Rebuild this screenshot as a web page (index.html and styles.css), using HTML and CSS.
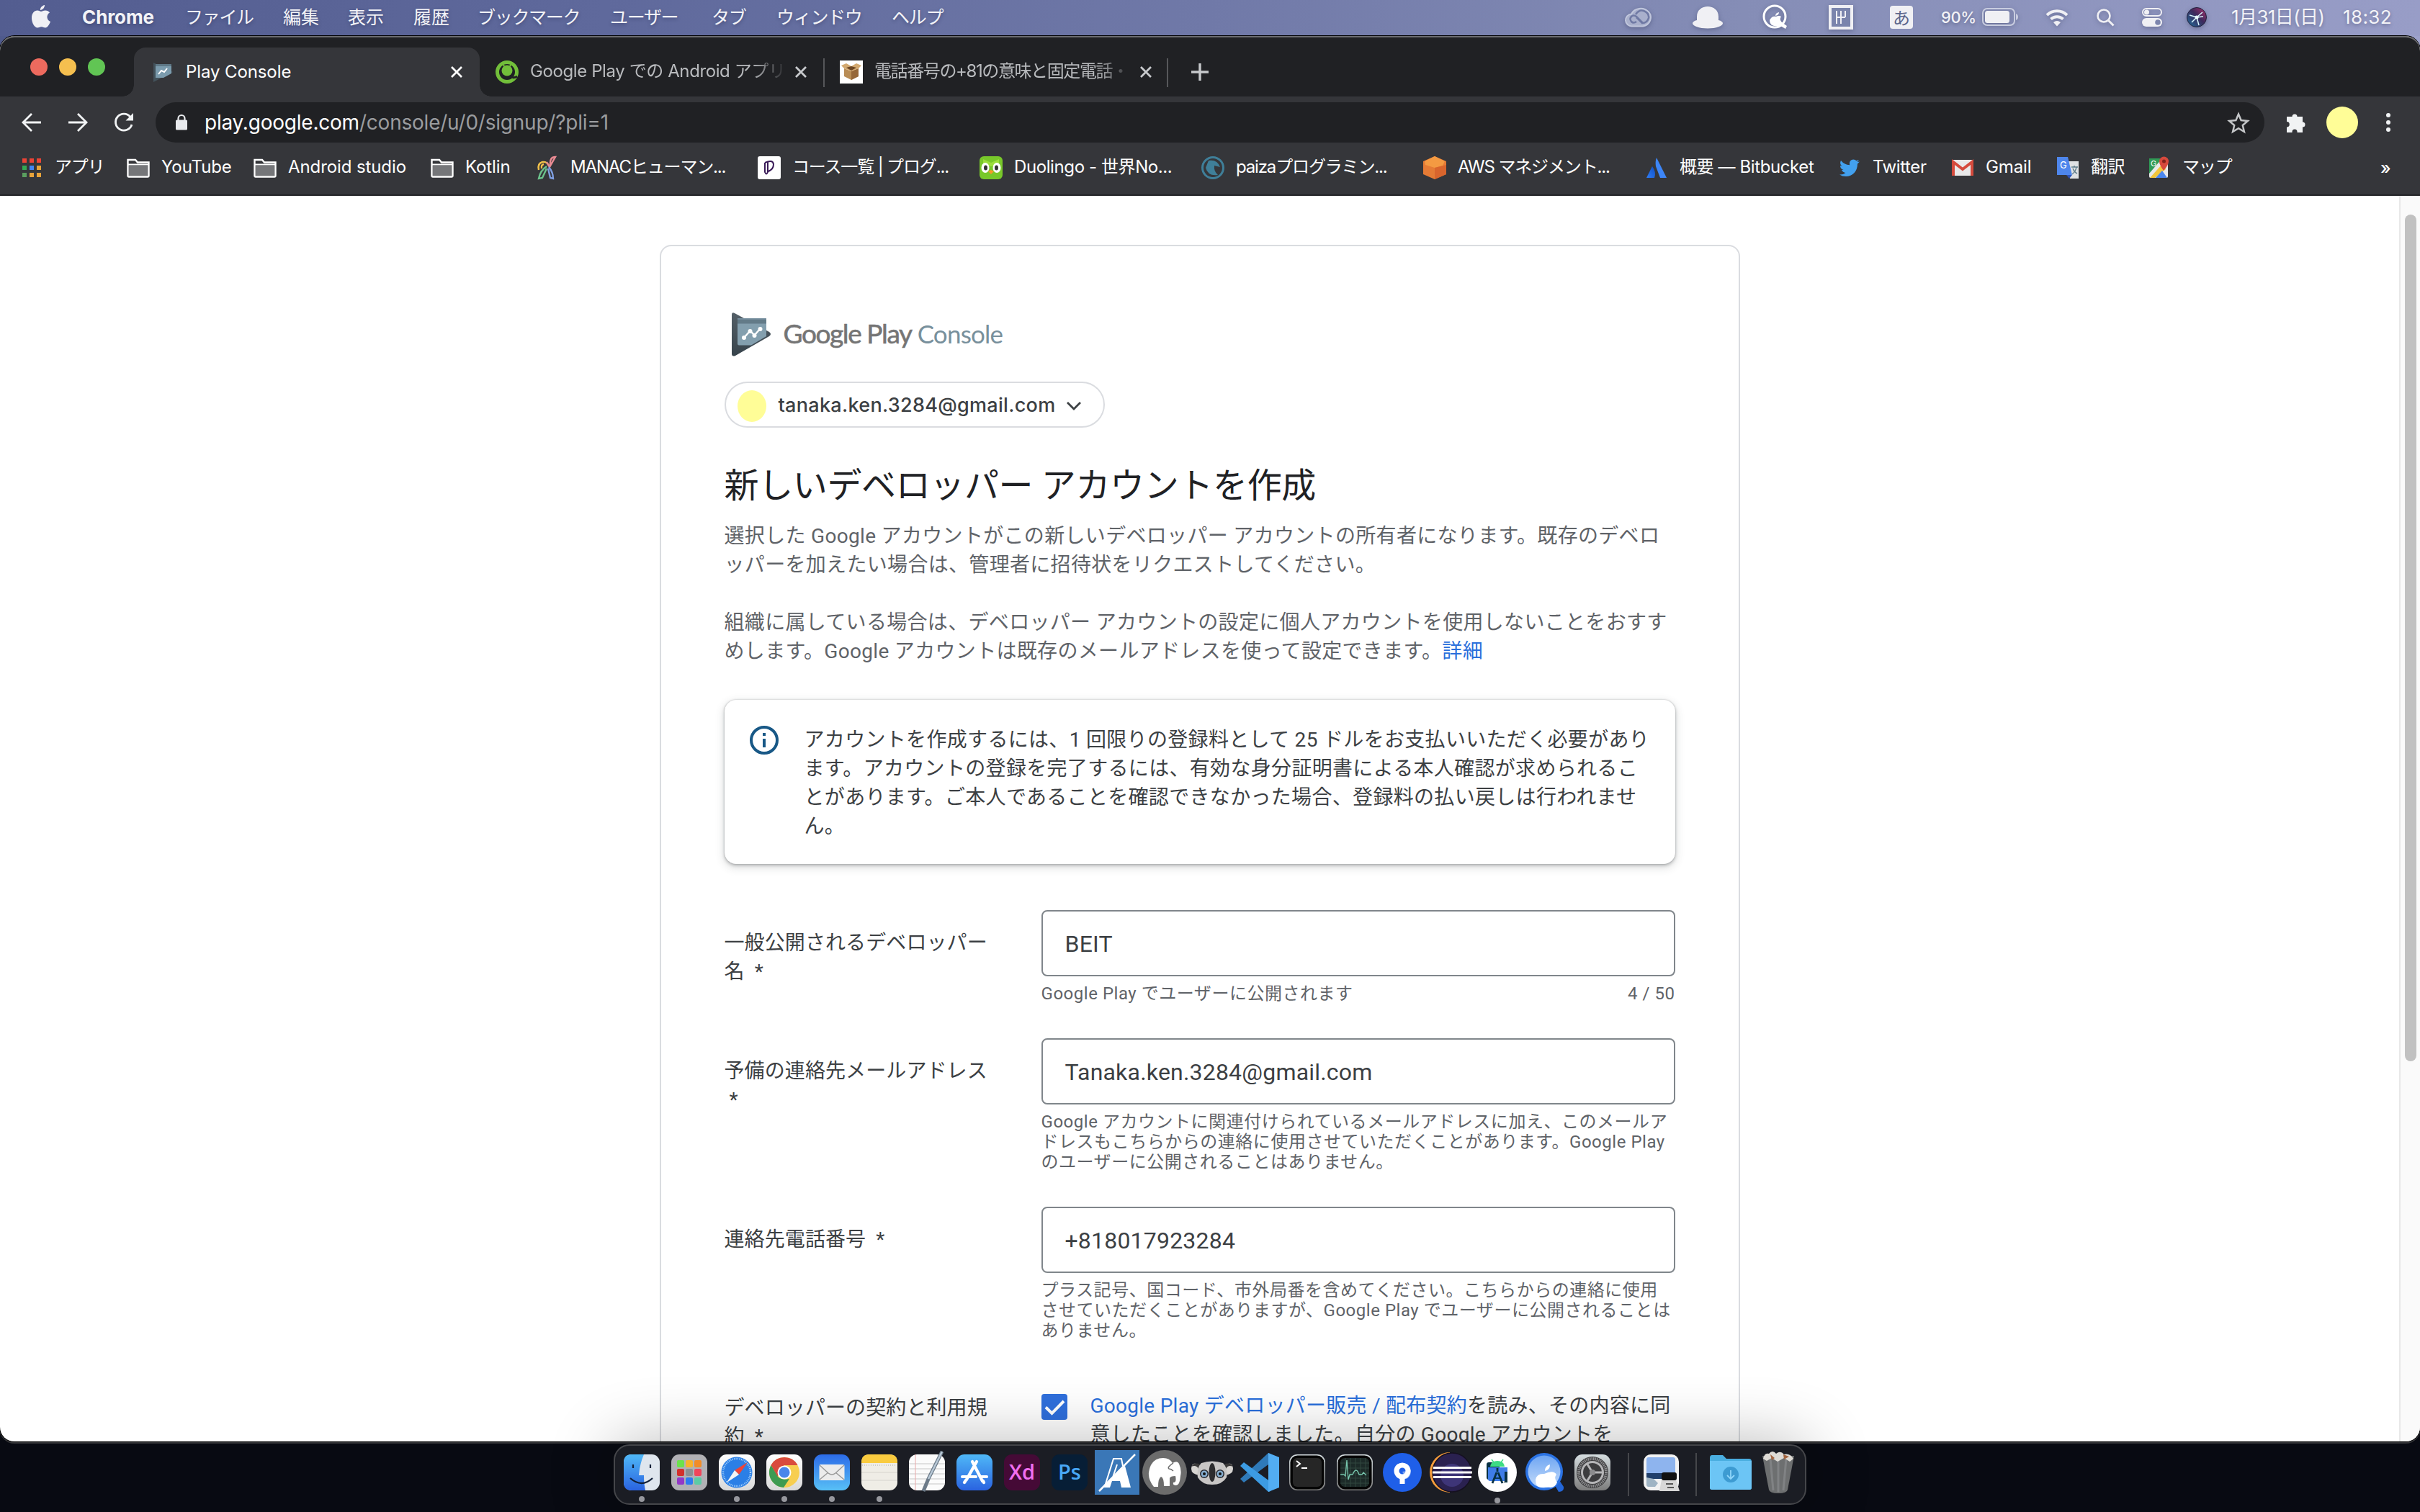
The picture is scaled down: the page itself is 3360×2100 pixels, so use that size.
FILE: index.html
```html
<!DOCTYPE html>
<html lang="ja">
<head>
<meta charset="utf-8">
<title>Play Console</title>
<link rel="stylesheet" href="styles.css">
</head>
<body>
<svg class="defs" width="0" height="0" aria-hidden="true">
  <defs>
    <linearGradient id="blueV" x1="0" y1="0" x2="0" y2="1"><stop offset="0" stop-color="#4fb8f7"/><stop offset="1" stop-color="#2a63e0"/></linearGradient>
    <linearGradient id="mailV" x1="0" y1="0" x2="0" y2="1"><stop offset="0" stop-color="#2c6be8"/><stop offset="1" stop-color="#58c0f6"/></linearGradient>
    <linearGradient id="greyV" x1="0" y1="0" x2="0" y2="1"><stop offset="0" stop-color="#ffffff"/><stop offset="1" stop-color="#d9d9d9"/></linearGradient>
    <linearGradient id="steelV" x1="0" y1="0" x2="0" y2="1"><stop offset="0" stop-color="#d5dde0"/><stop offset="1" stop-color="#7c7c7c"/></linearGradient>
    <linearGradient id="slateV" x1="0" y1="0" x2="0" y2="1"><stop offset="0" stop-color="#546068"/><stop offset="1" stop-color="#37434b"/></linearGradient>
    <linearGradient id="lensV" x1="0" y1="0" x2="0" y2="1"><stop offset="0" stop-color="#6ea5f2"/><stop offset="1" stop-color="#c4dcfb"/></linearGradient>
    <linearGradient id="atl" x1="1" y1="0" x2="0" y2="1"><stop offset="0" stop-color="#0f4fc4"/><stop offset="1" stop-color="#2f7df6"/></linearGradient>
    <linearGradient id="siri" x1="1" y1="0" x2="0" y2="1"><stop offset="0" stop-color="#b0306c"/><stop offset=".45" stop-color="#3c2a5c"/><stop offset="1" stop-color="#1f6f9c"/></linearGradient>
    <symbol id="folder" viewBox="0 0 32 32"><path d="M1.500 27V5h10.500l3 3.500h15.500V27q0 1.500-1.500 1.500H3q-1.500 0-1.500-1.500z" fill="none" stroke="#fff" stroke-width="2.400"/><path d="M3 13h26v14H3z" fill="#757679"/><path d="M2 11.500h28" stroke="#fff" stroke-width="2"/></symbol>
    <symbol id="close" viewBox="0 0 18 18"><path d="M2 2l14 14M16 2L2 16" stroke="currentColor" stroke-width="2.800"/></symbol>
  </defs>
</svg>
<div class="desktop">
  <header class="menubar">
    <nav class="menus">
      <svg class="apple" viewBox="0 0 26 32"><path d="M18 0c.3 3-2.600 7-6 7C11.500 4 14.500.5 18 0zM13 9c1.500 0 3-1.600 6-1.600 2.500 0 4.600 1.200 6 3.100-5.300 3-4.300 10.500 1 12.500-1.200 3.600-4 8.500-7 8.500-2 0-3-1.300-5.500-1.300S10 31.500 8 31.500C4 31.500 0 24.500 0 18 0 11.500 3.800 7.600 7.800 7.600 10.200 7.600 12 9 13 9z" fill="#f0f0f4"/></svg>
      <b>Chrome</b><span class="kana">ファイル</span><span>編集</span><span>表示</span><span>履歴</span><span class="kana">ブックマーク</span><span class="kana">ユーザー</span><span class="kana">タブ</span><span class="kana">ウィンドウ</span><span class="kana">ヘルプ</span>
    </nav>
    <div class="status">
      <svg width="38" height="28" viewBox="0 0 38 28"><path d="M9 26.500a8.500 8.500 0 0 1-1-17A14 12.500 0 1 1 24 26.500z" fill="#a9b0cc" stroke="#c0c6dc" stroke-width="2"/><path d="M24 22l-9-9q-4-3-7 0t0 7q3 3 7 0M14 10q5-7 11-5 8 3 7 10-2 7-9 7l-8-8" fill="none" stroke="#6f79a4" stroke-width="2.500"/></svg>
      <svg width="42" height="31" viewBox="0 0 42 31"><path d="M6 19V14C6 5 13 0 21 0s15 5 15 14v5c4 1 6 2.500 6 4.500C42 27 33 30.500 21 30.500S0 27 0 23.500C0 21.500 2 20 6 19z" fill="#f0f0f4"/></svg>
      <svg width="36" height="36" viewBox="0 0 36 36"><circle cx="17" cy="17" r="15" fill="none" stroke="#fff" stroke-width="3"/><path d="M23 11q0 4-5 5 0-4 5-5zM13 18q3-2 6-1 4-2 7 0-3 4 1 8l7 5-2 4-7-4q-8 1-12-1-6-6 0-11z" fill="#fff"/></svg>
      <svg width="34" height="34" viewBox="0 0 34 34"><path d="M2 2h30v30H2z" fill="#7a84ac" stroke="#f0f0f4" stroke-width="4"/><path d="M11 8v18M17 8v18M11 17h12M23 8v9M17 8v9" fill="none" stroke="#f0f0f4" stroke-width="2"/></svg>
      <span class="ime">あ</span>
      <span class="pct">90%</span>
      <svg width="51" height="26" viewBox="0 0 51 26"><rect x="1" y="1" width="44" height="23" rx="6" fill="none" stroke="#c9cde0" stroke-width="2"/><rect x="4" y="4" width="34" height="17" rx="3.500" fill="#f0f0f4"/><path d="M47 8q3 1 3 4.500T47 17z" fill="#c9cde0"/></svg>
      <svg width="32" height="25" viewBox="0 0 32 25"><path d="M2 9a20 20 0 0 1 28 0M7.500 14.500a12.500 12.500 0 0 1 17 0" fill="none" stroke="#f0f0f4" stroke-width="4"/><path d="M11 19q5-4 10 0l-5 5.500z" fill="#f0f0f4"/></svg>
      <svg width="26" height="25" viewBox="0 0 26 25"><circle cx="10" cy="10" r="8.500" fill="none" stroke="#f0f0f4" stroke-width="2.600"/><path d="M16 16l7.500 7.500" stroke="#f0f0f4" stroke-width="3"/></svg>
      <svg width="28" height="26" viewBox="0 0 28 26"><rect x="1" y="1" width="26" height="10" rx="5" fill="none" stroke="#f0f0f4" stroke-width="2"/><circle cx="6.500" cy="6" r="3.500" fill="#f0f0f4"/><rect y="14" width="28" height="12" rx="6" fill="#f0f0f4"/><circle cx="22" cy="20" r="3.800" fill="#7c85ad"/></svg>
      <svg width="28" height="28" viewBox="0 0 28 28"><circle cx="14" cy="14" r="13.500" fill="url(#siri)" stroke="#20223c"/><path d="M14 14L4 11M14 14l8-7M14 14l3 11M14 14l-7 7M14 14l9-1" stroke="#d8f8ff" stroke-width="1.500"/><circle cx="14" cy="14" r="2.500" fill="#eaffff"/></svg>
      <span class="date">1月31日(日)</span><span class="clock">18:32</span>
    </div>
  </header>

  <main class="window">
    <div class="tabstrip">
      <div class="lights"><i class="red"></i><i class="amber"></i><i class="green"></i></div>
      <div class="tab active">
        <svg class="fav" viewBox="0 0 32 32"><path d="M3 3v27L30 16z" fill="#43525b"/><path d="M6 5h22v13L17 24H6z" fill="#7b9bad"/><path d="M6 5h22v3H6z" fill="#5f7886"/><path d="M10 19l4-5 4 2 4-5" fill="none" stroke="#fff" stroke-width="2"/></svg>
        <span class="title">Play Console</span>
        <svg class="x"><use href="#close"/></svg>
      </div>
      <div class="tab second">
        <svg class="fav" viewBox="0 0 32 32"><circle cx="16" cy="16" r="13.500" fill="#202124" stroke="#72bf3a" stroke-width="5"/><circle cx="16" cy="14" r="7.500" fill="#72bf3a"/><path d="M10 5l3 4M22 5l-3 4" stroke="#72bf3a" stroke-width="2"/><path d="M21 21q3 5 9 1" fill="none" stroke="#202124" stroke-width="3"/></svg>
        <span class="title">Google Play での Android アプリ</span>
        <svg class="x"><use href="#close"/></svg>
      </div>
      <div class="tab third">
        <svg class="fav" viewBox="0 0 32 32"><path d="M0 0h32v32H0z" fill="#fff"/><path d="M6 11l10 4 10-4v11l-10 5-10-5z" fill="#b98d56"/><path d="M16 15l10-4v11l-10 5z" fill="#96683a"/><path d="M6 11l-4-4 7-3 7 4 7-4 7 3-4 4-10 4z" fill="#d3a970"/><path d="M9 10l7-2 7 2-7 4z" fill="#6c4623"/></svg>
        <span class="title">電話番号の+81の意味と固定電話・</span>
        <svg class="x"><use href="#close"/></svg>
      </div>
      <svg class="plus" viewBox="0 0 24 24"><path d="M12 0v24M0 12h24" stroke="#c7c9cc" stroke-width="3.400"/></svg>
    </div>

    <div class="toolbar">
      <svg width="28" height="28" viewBox="0 0 28 28"><path d="M27 14H3M14 2L2 14l12 12" fill="none" stroke="#f1f3f4" stroke-width="2.800"/></svg>
      <svg width="28" height="28" viewBox="0 0 28 28"><path d="M1 14h24M14 2l12 12-12 12" fill="none" stroke="#f1f3f4" stroke-width="2.800"/></svg>
      <svg width="28" height="28" viewBox="0 0 28 28"><path d="M23 6.500A11.500 11.500 0 1 0 25 17" fill="none" stroke="#f1f3f4" stroke-width="2.800"/><path d="M27 1v10.500H16.500z" fill="#f1f3f4"/></svg>
      <div class="omnibox">
        <svg width="16" height="22" viewBox="0 0 16 22"><rect y="7.500" width="16" height="14" rx="1.500" fill="#e8eaed"/><path d="M3.500 9V5.500a4.500 4.500 0 0 1 9 0V9" fill="none" stroke="#e8eaed" stroke-width="2.200"/></svg>
        <span class="url">play.google.com<em>/console/u/0/signup/?pli=1</em></span>
        <svg class="star" width="30" height="29" viewBox="0 0 30 29"><path d="M15 2.500l3.600 8.600 9.200.8-7 6.100 2.100 9-7.900-4.800L7.100 27l2.100-9-7-6.100 9.200-.8z" fill="none" stroke="#c4c6c8" stroke-width="2.500"/></svg>
      </div>
      <svg width="28" height="28" viewBox="0 0 28 28"><path d="M1 6h7.500a3.500 3.500 0 1 1 7 0H23v7.500a3.500 3.500 0 1 1 0 7V28h-7.500v-1a3.500 3.500 0 0 0-7 0v1H1v-7.500a3.700 3.700 0 0 0 0-7.500z" fill="#f1f3f4"/></svg>
      <span class="avatar"></span>
      <svg width="8" height="28" viewBox="0 0 8 28"><circle cx="4" cy="4" r="3" fill="#f1f3f4"/><circle cx="4" cy="14" r="3" fill="#f1f3f4"/><circle cx="4" cy="24" r="3" fill="#f1f3f4"/></svg>
    </div>

    <div class="bookmarks">
      <a><svg viewBox="0 0 32 32"><path d="M3 3h6v6H3zM13 3h6v6h-6zM23 3h6v6h-6z" fill="#ea4335"/><path d="M3 13h6v6H3z" fill="#34a853"/><path d="M13 13h6v6h-6z" fill="#4285f4"/><path d="M23 13h6v6h-6zM13 23h6v6h-6zM23 23h6v6h-6z" fill="#e8a33a"/><path d="M3 23h6v6H3z" fill="#5a9e5f"/></svg><span class="k">アプリ</span></a>
      <a><svg><use href="#folder"/></svg><span class="latin">YouTube</span></a>
      <a><svg><use href="#folder"/></svg><span class="latin">Android studio</span></a>
      <a><svg><use href="#folder"/></svg><span class="latin">Kotlin</span></a>
      <a><svg viewBox="0 0 32 32" fill="none" stroke-width="2.400"><path d="M4 19q-2-9 5-11 6-1 9 5M8 17q-1-5 3-6" stroke="#f0c04a"/><path d="M15 8l4 7 8-14q-8 0-7 11" stroke="#e98b93"/><path d="M15 14q-9 6-11 17l5-1 6-13" stroke="#6cc38c"/><path d="M18 15q6 7 6 16l-4-1-3-13" stroke="#7f9fe0"/></svg><span class="k">MANACヒューマン...</span></a>
      <a><svg viewBox="0 0 32 32"><rect width="32" height="32" rx="3" fill="#fff"/><path d="M10 9q11-5 12 2 0 7-7 10M10 9v13q2 5 4 0V7" fill="none" stroke="#3a1b58" stroke-width="2"/></svg><span class="k">コース一覧 | プログ...</span></a>
      <a><svg viewBox="0 0 32 32"><rect width="32" height="32" rx="6" fill="#78c82a"/><path d="M5 4l11 5 11-5v10H5z" fill="#9bdd3c"/><ellipse cx="8" cy="16" rx="5.500" ry="7" fill="#fff"/><ellipse cx="24" cy="16" rx="5.500" ry="7" fill="#fff"/><ellipse cx="8.500" cy="16" rx="2.500" ry="3.500" fill="#333"/><ellipse cx="23.500" cy="16" rx="2.500" ry="3.500" fill="#333"/><path d="M12 21l4-2 4 2-4 4z" fill="#f49a28"/></svg><span>Duolingo - 世界No...</span></a>
      <a><svg viewBox="0 0 32 32"><circle cx="16" cy="16" r="14.500" fill="none" stroke="#3f7f99" stroke-width="3"/><path d="M10 6q12-2 16 9l-8-2q-1 8 5 13-14 2-17-10z" fill="#3f7f99"/></svg><span class="k">paizaプログラミン...</span></a>
      <a><svg viewBox="0 0 32 32"><path d="M16 0l16 7v18l-16 7-16-7V7z" fill="#e57b35"/><path d="M16 0l14 7-3 6-11 3L3 12 2 7z" fill="#f49a42"/><path d="M16 16l16-4v13l-16 7z" fill="#d9652d"/></svg><span class="k">AWS マネジメント...</span></a>
      <a><svg viewBox="0 0 32 32"><path d="M16 2q-2 5-1 12l6 16h9z" fill="#3d86f8"/><path d="M10 14q6 8 3 16H2z" fill="url(#atl)"/></svg><span>概要 — Bitbucket</span></a>
      <a><svg viewBox="0 0 32 32"><path d="M30 7.500l-3 3C27 21 20 28 11 28q-5 0-9-2.500 5 .3 8.500-2.500-4-.5-5.500-4h2.500Q3 17.500 3 13l2.500.7Q1.500 10.500 4 6q5 6 12 6.200Q15 5 21 4.500q3 0 4.500 1.800L29 5l-2.300 3z" fill="#42a0ee"/></svg><span>Twitter</span></a>
      <a><svg viewBox="0 0 32 32"><rect x="1" y="5" width="30" height="22" rx="2" fill="#e9e9e9"/><path d="M3 27V8l13 10L29 8v19" fill="none" stroke="#d54b3d" stroke-width="4"/></svg><span class="latin">Gmail</span></a>
      <a><svg viewBox="0 0 32 32"><path d="M14 7h17v24H19z" fill="#dfe1e3"/><path d="M1 1h15l6 25H1z" fill="#4e86ec"/><path d="M14 26h8l-4 5z" fill="#2c52b8"/><path d="M21 15h9M25 13v2M22 25q5-4 6-10M23 17q2 5 6 7" stroke="#607d8b" stroke-width="1.500" fill="none"/><text x="5" y="17" font-size="13" fill="#fff">G</text></svg><span>翻訳</span></a>
      <a><svg viewBox="0 0 32 32"><rect x="2" y="3" width="26" height="27" rx="2" fill="#e8e8e8"/><path d="M2 3h18L2 24z" fill="#2f9a55"/><path d="M3 30L20 11l5 7L10 30z" fill="#f3c63b"/><path d="M11 30l9-10 7 10z" fill="#4a86ee"/><path d="M22 20q-6-8-6-13a6.500 6.500 0 0 1 13 0q0 5-7 13z" fill="#d6493c"/><circle cx="22.500" cy="7" r="2.500" fill="#84241c"/><text x="4" y="14" font-size="11" fill="#fff">G</text></svg><span class="k">マップ</span></a>
      <b>»</b>
    </div>

    <div class="viewport">
      <div class="page">
        <section class="card">
          <div class="logo">
            <svg width="54" height="60" viewBox="0 0 54 60"><path d="M0 3Q0-1 4 1l48 26q4 3 0 6L5 60Q0 62 0 57z" fill="url(#slateV)"/><path d="M8 8h40v25L27 45.500H10q-2 0-2-2z" fill="#839fae"/><path d="M8 8h40v7.500H8z" fill="#637b88"/><path d="M8 8h40v1.800H8z" fill="#7890a0"/><path d="M17 35l8.500-9.500 6 6 8-9" fill="none" stroke="#fff" stroke-width="2.400"/><g fill="#fff"><circle cx="17" cy="35" r="3"/><circle cx="25.500" cy="26" r="3"/><circle cx="31.500" cy="32" r="3"/><circle cx="39.500" cy="23" r="3"/></g></svg>
            <span class="wordmark">Google Play</span><span class="wordmark light">Console</span>
          </div>
          <button class="account"><i></i><span>tanaka.ken.3284@gmail.com</span><svg width="22" height="14" viewBox="0 0 22 14"><path d="M2 2l9 9 9-9" fill="none" stroke="#3c4043" stroke-width="2.800"/></svg></button>
          <h1>新しいデベロッパー アカウントを作成</h1>
          <p>選択した Google アカウントがこの新しいデベロッパー アカウントの所有者になります。既存のデベロ<br>ッパーを加えたい場合は、管理者に招待状をリクエストしてください。</p>
          <p>組織に属している場合は、デベロッパー アカウントの設定に個人アカウントを使用しないことをおすす<br>めします。Google アカウントは既存のメールアドレスを使って設定できます。<a>詳細</a></p>
          <div class="alert">
            <svg width="40" height="40" viewBox="0 0 40 40"><circle cx="20" cy="20" r="18" fill="none" stroke="#185886" stroke-width="4"/><path d="M18 18h4v12h-4zM18 10h4v4h-4z" fill="#185886"/></svg>
            <div>アカウントを作成するには、1 回限りの登録料として 25 ドルをお支払いいただく必要があり<br>ます。アカウントの登録を完了するには、有効な身分証明書による本人確認が求められるこ<br>とがあります。ご本人であることを確認できなかった場合、登録料の払い戻しは行われませ<br>ん。</div>
          </div>
          <form class="form">
            <label>一般公開されるデベロッパー<br>名 &nbsp;*</label>
            <div class="field"><div class="input">BEIT</div><div class="help"><span>Google Play でユーザーに公開されます</span><span>4 / 50</span></div></div>
            <label>予備の連絡先メールアドレス<br>&nbsp;*</label>
            <div class="field"><div class="input">Tanaka.ken.3284@gmail.com</div><div class="help">Google アカウントに関連付けられているメールアドレスに加え、このメールア<br>ドレスもこちらからの連絡に使用させていただくことがあります。Google Play<br>のユーザーに公開されることはありません。</div></div>
            <label>連絡先電話番号 &nbsp;*</label>
            <div class="field"><div class="input">+818017923284</div><div class="help">プラス記号、国コード、市外局番を含めてください。こちらからの連絡に使用<br>させていただくことがありますが、Google Play でユーザーに公開されることは<br>ありません。</div></div>
            <label>デベロッパーの契約と利用規<br>約 &nbsp;*</label>
            <div class="agree"><svg width="36" height="36" viewBox="0 0 36 36"><rect width="36" height="36" rx="4" fill="#2f6fdc"/><path d="M6 18.500l8.500 8.500L31 10" fill="none" stroke="#fff" stroke-width="4"/></svg><div><a>Google Play デベロッパー販売 / 配布契約</a>を読み、その内容に同<br>意したことを確認しました。自分の Google アカウントを</div></div>
          </form>
        </section>
      </div>
      <div class="scroll"><i></i></div>
    </div>
  </main>

  <footer class="dock">
    <div class="slot on"><svg viewBox="0 0 50 50"><rect width="50" height="50" rx="11" fill="#dfe6ee"/><path d="M11 0h17q-6 14-7 29h7q0 12 2 21H11Q0 50 0 39V11Q0 0 11 0z" fill="url(#blueV)"/><path d="M13 14v5M37 14v5" stroke="#12213a" stroke-width="2.200"/><path d="M9 33q16 14 31 0" fill="none" stroke="#12213a" stroke-width="2.200"/></svg></div>
    <div class="slot"><svg viewBox="0 0 50 50"><rect width="50" height="50" rx="11" fill="#b1b1b5"/><g><rect x="8" y="8" width="10" height="10" rx="2" fill="#6be24c"/><rect x="20" y="8" width="10" height="10" rx="2" fill="#f7b32c"/><rect x="32" y="8" width="10" height="10" rx="2" fill="#f28c28"/><rect x="8" y="20" width="10" height="10" rx="2" fill="#d3302c"/><rect x="20" y="20" width="10" height="10" rx="2" fill="#8b8f94"/><rect x="32" y="20" width="10" height="10" rx="2" fill="#f0455a"/><rect x="8" y="32" width="10" height="10" rx="2" fill="#9338c8"/><rect x="20" y="32" width="10" height="10" rx="2" fill="#2d7bf0"/><rect x="32" y="32" width="10" height="10" rx="2" fill="#5ccba5"/></g></svg></div>
    <div class="slot on"><svg viewBox="0 0 50 50"><rect width="50" height="50" rx="11" fill="url(#greyV)"/><circle cx="25" cy="25" r="21.500" fill="#2b7fe6"/><circle cx="25" cy="25" r="19" fill="none" stroke="#a9d4fb" stroke-width="2.500" stroke-dasharray="1 1.500"/><path d="M40 11L28 28l-6-6z" fill="#ee4438"/><path d="M11 39l11-17 6 6z" fill="#f4f4f4"/></svg></div>
    <div class="slot on"><svg viewBox="0 0 50 50"><rect width="50" height="50" rx="11" fill="url(#greyV)"/><circle cx="25" cy="25" r="21" fill="#f7ce50"/><path d="M25 4a21 21 0 0 1 18.500 11H25L15.500 31 6.500 15A21 21 0 0 1 25 4z" fill="#d94b3d"/><path d="M6.500 15L16 31q5 5 16 3L24 46A21 21 0 0 1 6.500 15z" fill="#3e9b52"/><circle cx="25" cy="25" r="9.500" fill="#fff"/><circle cx="25" cy="25" r="7.500" fill="#4a86ea"/></svg></div>
    <div class="slot on"><svg viewBox="0 0 50 50"><rect width="50" height="50" rx="11" fill="url(#mailV)"/><rect x="7.500" y="14" width="35" height="22" rx="2" fill="#ececec"/><path d="M8 15l12 11q5 4 10 0l12-11M8 35l12-10M42 35L30 25" fill="none" stroke="#9a9a9a" stroke-width="1.500"/></svg></div>
    <div class="slot on"><svg viewBox="0 0 50 50"><rect width="50" height="50" rx="11" fill="#efede6"/><path d="M0 12V11Q0 0 11 0h28q11 0 11 11v1z" fill="#f9cb3f"/><path d="M1 15h48" stroke="#aaa" stroke-dasharray="1 2"/><path d="M0 25h50M0 36h50" stroke="#d6d4cd"/></svg></div>
    <div class="slot"><svg viewBox="0 0 50 50"><rect width="50" height="50" rx="11" fill="#fbfbfb"/><path d="M0 13h50M0 20h50M0 27h50M0 34h50M0 41h50" stroke="#c7c7c7"/><path d="M9 0v50" stroke="#e9a7a7"/><path d="M46-4L27 34l-7 17" stroke="#6d7b89" stroke-width="5" fill="none"/><path d="M46-4L27 34" stroke="#b8c8d6" stroke-width="2.500"/></svg></div>
    <div class="slot"><svg viewBox="0 0 50 50"><rect width="50" height="50" rx="11" fill="url(#blueV)"/><path d="M22 10l14 27M28 10L14 35M8 31h19M34 31h8M11 39l2-3M38 39l-1-2" stroke="#fff" stroke-width="4.200" stroke-linecap="round"/></svg></div>
    <div class="slot"><span class="tile xd">Xd</span></div>
    <div class="slot"><span class="tile ps">Ps</span></div>
    <div class="slot"><svg class="big" viewBox="0 0 62 62"><path d="M0 0h62v62H0z" fill="#3a77b7"/><path d="M39 22l-2-10H26L14 50M31 20l-5 15h5" fill="none" stroke="#fff" stroke-width="2"/><path d="M42 22l8 30H37l-2-9H24l-3 9h-9l4-7z" fill="#fff"/><path d="M6 57L56 6" stroke="#fff" stroke-width="2.500"/></svg></div>
    <div class="slot"><svg class="big" viewBox="0 0 62 62"><circle cx="31" cy="31" r="31" fill="#6c6c6c"/><path d="M16 51q-8-10-7-20 3-20 20-20 9 0 13 7 7-4 9 1 4 9 2 17-1 13-6 13-5 0-4-4 5 0 3-9-7 0-8 3v11H30q0-12-4-13-4 2-4 14z" fill="#fff"/><path d="M43 18q-9 6-6 8 3 0 6 3" fill="none" stroke="#6c6c6c" stroke-width="1.500"/></svg></div>
    <div class="slot"><svg class="big" viewBox="0 0 62 62"><path d="M14 22Q3 14 2 26q0 8 12 9z" fill="#d7d4d1"/><path d="M48 22q11-8 12 4 0 8-12 9z" fill="#d7d4d1"/><path d="M14 20q-8-4-12 3 7-3 10 3zM48 20q8-4 12 3-7-3-10 3z" fill="#3b3a3a"/><path d="M16 18q15-5 30 0 7 7 5 20-6 10-20 10T11 38q-2-13 5-20z" fill="#c8c6c5"/><circle cx="20" cy="33" r="6" fill="#24262b"/><circle cx="42" cy="33" r="6" fill="#24262b"/><circle cx="20" cy="33" r="4.500" fill="#86aed0"/><circle cx="42" cy="33" r="4.500" fill="#86aed0"/><circle cx="20" cy="33" r="2" fill="#111"/><circle cx="42" cy="33" r="2" fill="#111"/><ellipse cx="31" cy="31" rx="4.500" ry="13" fill="#2c2c2e"/></svg></div>
    <div class="slot"><svg class="mid" viewBox="0 0 54 54"><path d="M0 36l5 5L43 13V2L39 0z" fill="#2f7ab9"/><path d="M0 18l5-5 37 27v13l-3 1z" fill="#3c9be3"/><path d="M39 0l15 6v42l-15 6z" fill="#52adf2"/></svg></div>
    <div class="slot"><svg viewBox="0 0 50 50"><rect width="50" height="50" rx="11" fill="url(#steelV)"/><rect x="1.500" y="1.500" width="47" height="47" rx="10" fill="#050505"/><rect x="5" y="5" width="40" height="40" rx="6" fill="#262626"/><path d="M10 9l5 4-5 4M17 19h8" fill="none" stroke="#fff" stroke-width="2"/></svg></div>
    <div class="slot"><svg viewBox="0 0 50 50"><rect width="50" height="50" rx="11" fill="url(#steelV)"/><rect x="1.500" y="1.500" width="47" height="47" rx="10" fill="#050505"/><rect x="5" y="5" width="40" height="40" rx="6" fill="#1c2a28"/><path d="M12 5v40M19 5v40M26 5v40M33 5v40M40 5v40M5 12h40M5 19h40M5 26h40M5 33h40M5 40h40" stroke="#30463f"/><path d="M5 28h5l2 2 2-22 2 27 2-7h4q5-12 9 0h4l2-3 4 4" fill="none" stroke="#77c7ae" stroke-width="1.300"/></svg></div>
    <div class="slot"><svg class="mid" viewBox="0 0 54 54"><circle cx="27" cy="27" r="27" fill="#1f5fe8"/><path d="M27 26l12-2q0 10-7 12z" fill="#7ca4f3"/><circle cx="27" cy="25" r="8" fill="none" stroke="#fff" stroke-width="7"/><path d="M23.500 31h7v12h-7z" fill="#fff"/></svg></div>
    <div class="slot"><svg class="big" viewBox="0 0 62 62"><path d="M31 3a28 28 0 0 0 0 56" fill="#f59c3c"/><circle cx="34" cy="31" r="27" fill="#2a2150" stroke="#151020" stroke-width="1.500"/><circle cx="34" cy="35" r="16" fill="#3e3578"/><path d="M8 24.500h53M7 31h55M8 37.500h53" stroke="#fff" stroke-width="3"/></svg></div>
    <div class="slot on"><svg class="mid" viewBox="0 0 54 54"><circle cx="27" cy="27" r="27" fill="#fff"/><rect x="12" y="13" width="18" height="24" rx="3" fill="#083042"/><path d="M14 20h27v19H17q-3 0-3-3z" fill="#3f7de8"/><path d="M17 19a10 8 0 0 1 20 0z" fill="#3ddc84"/><path d="M19 9l3 4M35 9l-3 4" stroke="#3ddc84" stroke-width="1.500"/><path d="M27 21v5M26 27l-6 15M28 27l6 15" stroke="#083042" stroke-width="2.800"/><path d="M22 35h10" stroke="#083042" stroke-width="1.800"/><path d="M37 26h4v15h-6q2 0 2-3z" fill="#083042"/></svg></div>
    <div class="slot"><svg class="mid" viewBox="0 0 54 54"><path d="M38 40l8 14q8 0 7-7l-8-12z" fill="#2467d9"/><circle cx="26" cy="26" r="26" fill="#2b73e4"/><circle cx="26" cy="26" r="22.500" fill="url(#lensV)"/><path d="M34 16q0 8-7 9 0-7 7-9zM26 29q13-6 17 1-4 5 1 11-3 7-9 7l-8-1Q14 51 14 37q2-9 12-8z" fill="#fff"/></svg></div>
    <div class="slot"><svg viewBox="0 0 50 50"><rect width="50" height="50" rx="11" fill="url(#steelV)"/><circle cx="25" cy="25" r="22" fill="#3c3c3e"/><circle cx="25" cy="25" r="19" fill="none" stroke="#8e8e90" stroke-width="4" stroke-dasharray="1.500 1"/><circle cx="25" cy="25" r="14.500" fill="none" stroke="#b5b5b7" stroke-width="3"/><path d="M25 25h15M25 25L17 12M25 25l-8 13" stroke="#b5b5b7" stroke-width="3"/><circle cx="25" cy="25" r="4" fill="#8b8b8d"/></svg></div>
    <hr>
    <div class="slot"><svg class="mid" viewBox="0 0 54 54"><rect x="2" y="2" width="49" height="50" rx="10" fill="#f2f2f2"/><path d="M6 9q0-3 3-3h34q3 0 3 3v19H6z" fill="#8eb4ee"/><path d="M6 28h40v8H6z" fill="#203f6b"/><path d="M6 34l10 2 6 6-4 5H9q-3 0-3-3z" fill="#9fb4c4"/><path d="M27 37h20l5 16H24z" fill="#d8d8d8"/><rect x="27" y="27" width="21" height="11" rx="3" fill="#111"/><path d="M33 43h10M35 48h9" stroke="#555" stroke-width="2"/></svg></div>
    <hr>
    <div class="slot"><svg class="mid" viewBox="0 0 54 50"><path d="M-2 5q0-4 3-4h15l5 5h31q4 0 4 4v36q0 3-3 3H1q-3 0-3-3z" fill="#4aaee0"/><path d="M-2 9h58v37q0 3-3 3H1q-3 0-3-3z" fill="#6cc5f5"/><circle cx="27" cy="28" r="11" fill="#3d9bd2"/><path d="M27 22v11M22 29l5 5 5-5" fill="none" stroke="#8fd5fa" stroke-width="1.800"/></svg></div>
    <div class="slot"><svg class="big" viewBox="0 0 62 62"><path d="M9 8l9 47q1 5 13 5t13-5l9-47z" fill="#6d6f70"/><path d="M20 12l4 44M31 12v46M42 12l-4 44" stroke="#808284" stroke-width="3"/><path d="M10 12q2-9 8-7 5-6 10 0 6-5 11 1 8-2 13 6l-5 4-8-5-9 5-8-5-7 4z" fill="#dedbd5"/><path d="M20 6l6 5-4 3zM38 6l8 3-7 4z" fill="#a4653f"/></svg></div>
  </footer>
</div>
</body>
</html>
```
FILE: styles.css
```css
* { box-sizing: border-box; }
body { margin: 0; background: #0b0d16; }
svg { display: block; overflow: visible; }
.defs { position: absolute; }
i, em { font-style: normal; }
hr { margin: 0; border: 0; }

.desktop {
  position: relative;
  width: 3360px;
  height: 2100px;
  overflow: hidden;
  display: flex;
  flex-direction: column;
  background: linear-gradient(90deg, #4f5a8c, #9da2cb) top / 100% 100px no-repeat, #080a12;
  font-family: Inter, "Noto Sans CJK JP", sans-serif;
  white-space: nowrap;
}

/* macOS menu bar */
.menubar {
  flex: none;
  height: 50px;
  padding: 0 0 2px 44px;
  display: flex;
  justify-content: space-between;
  background: linear-gradient(90deg, #535d90 0%, #5f699c 25%, #7079a8 50%, #858db6 72%, #989dc7 100%);
  color: #f3f3f7;
  font-size: 25px;
  line-height: 46px;
  text-shadow: 0 2px 5px rgba(20, 25, 60, .35);
}
.menus { display: grid; grid-template-columns: 70px 143px 136px 90px 91px 89px 184px 141px 90px 160px 100px; align-items: center; }
.menus span { margin-top: -1px; }
.menus .apple { width: 26px; height: 32px; margin-top: -3px; }
.menus b { font-size: 26px; letter-spacing: -.1px; }
.kana { letter-spacing: -1.300px; }
.status { display: grid; grid-template-columns: 93px 97px 92px 85px 71px 57px 88px 71px 63px 62px 62px 155px 107px; align-items: center; }
.status svg { filter: drop-shadow(0 2px 3px rgba(20, 25, 60, .3)); }
.ime { width: 32px; height: 32px; border-radius: 4px; background: #f0f0f4; color: #5c668c; font: 24px/31px "Noto Sans CJK JP", sans-serif; text-align: center; text-shadow: none; }
.pct { font-size: 22px; letter-spacing: -.4px; font-weight: 500; }
.date { font-size: 26px; letter-spacing: -.6px; margin-top: -1px; }
.clock { font-size: 26px; letter-spacing: .4px; margin-top: -1px; }

/* Browser window */
.window {
  height: 1952px;
  flex: none;
  display: flex;
  flex-direction: column;
  border-radius: 20px;
  overflow: hidden;
  background: #fff;
  box-shadow: 0 0 0 1px #000, 0 2px 0 1px #333437;
}
.tabstrip { flex: none; height: 84px; background: #202124; box-shadow: inset 0 2px #6a6b6e; border-radius: 20px 20px 0 0; display: flex; align-items: flex-end; }
.lights { width: 186px; height: 82px; padding-left: 42px; display: flex; gap: 16px; align-items: center; }
.lights i { width: 24px; height: 24px; border-radius: 50%; }
.red { background: #ed6a5e; }
.amber { background: #f5bf4f; }
.green { background: #61c554; }
.tab { height: 68px; display: flex; align-items: center; font-size: 24px; color: #b9bbbe; }
.fav { flex: none; width: 32px; height: 32px; margin-right: 16px; }
.x { flex: none; width: 18px; height: 18px; color: #c9cbce; }
.title { flex: 1; overflow: hidden; line-height: 36px; margin-top: -1px; }
.active { position: relative; width: 480px; padding: 0 23px 0 24px; background: #35363a; border-radius: 16px 16px 0 0; color: #fff; }
.active .title { letter-spacing: -.1px; }
.active .x { color: #fff; }
.active::before, .active::after { content: ""; position: absolute; bottom: 0; width: 16px; height: 16px; }
.active::before { left: -16px; background: radial-gradient(circle at 0 0, transparent 15.500px, #35363a 16px); }
.active::after { right: -16px; background: radial-gradient(circle at 100% 0, transparent 15.500px, #35363a 16px); }
.second { width: 477px; padding: 0 22px 0 22px; }
.second .title, .third .title { margin: -3px 10px 0 0; -webkit-mask: linear-gradient(90deg, #000 86%, transparent); mask: linear-gradient(90deg, #000 86%, transparent); }
.second .title { letter-spacing: -.4px; }
.third { position: relative; width: 479px; padding: 0 22px 0 23px; }
.third .title { letter-spacing: -1.400px; }
.third::before, .third::after { content: ""; position: absolute; top: 15px; width: 2px; height: 40px; background: #56575a; }
.third::before { left: 0; }
.third::after { right: 0; }
.plus { width: 24px; height: 24px; margin: 0 0 22px 32px; }

.toolbar { flex: none; height: 72px; padding: 0 40px 0 30px; background: #35363a; display: flex; align-items: center; }
.toolbar > svg { flex: none; margin-right: 36px; }
.toolbar > svg:nth-of-type(3) { margin-right: 30px; }
.omnibox { flex: none; width: 2928px; height: 56px; border-radius: 28px; background: #202124; padding: 0 21px 0 28px; display: flex; align-items: center; color: #fff; font-size: 28px; }
.omnibox svg { flex: none; }
.url { flex: 1; margin-left: 24px; letter-spacing: -.22px; }
.url em { color: #9a9c9f; }
.omnibox + svg { margin: 0 28px 0 30px !important; }
.avatar { flex: none; width: 44px; height: 44px; border-radius: 50%; background: #fffd97; margin-right: 38px; }
.avatar + svg { margin: 0 !important; }
.bookmarks { flex: none; height: 66px; padding: 0 0 10px 28px; background: #35363a; border-bottom: 2px solid #222326; display: grid; grid-template-columns: 148px 176px 246px 146px 308px 308px 308px 308px 308px 268px 157px 146px 127px 310px 60px; align-items: center; color: #fff; font-size: 24px; }
.bookmarks a { display: flex; gap: 16px; align-items: center; height: 40px; line-height: 36px; }
.bookmarks a svg { flex: none; width: 32px; height: 32px; }
.bookmarks span { letter-spacing: -.4px; margin-top: -2px; }
.bookmarks .latin { letter-spacing: -.1px; }
.bookmarks .k { letter-spacing: -1.150px; }
.bookmarks b { font-weight: 500; padding-left: 13px; }

/* Page */
.viewport { flex: 1; min-height: 0; display: flex; overflow: hidden; }
.page { flex: 1; }
.scroll { flex: none; width: 29px; padding: 26px 0 0 6px; background: #fafafa; border-left: 2px solid #e8e8e8; }
.scroll i { display: block; width: 16px; height: 1176px; border-radius: 8px; background: #c1c1c1; }
.card {
  width: 1500px;
  height: 2200px;
  margin: 68px auto 0;
  padding: 92px 88px 0;
  border: 2px solid #dadce0;
  border-radius: 16px;
  font-family: Roboto, "Noto Sans CJK JP", sans-serif;
  font-size: 28px;
  line-height: 40px;
  letter-spacing: .32px;
  color: #3c4043;
}
.card a { color: #2a6fdb; }
.logo { height: 60px; padding-left: 10px; display: flex; align-items: center; }
.wordmark { margin: -2px 0 0 18px; font: 400 37px/50px Lato, sans-serif; letter-spacing: -1.400px; color: #757575; -webkit-text-stroke: .6px #757575; }
.wordmark.light { margin-left: 8px; font-size: 35px; letter-spacing: -.8px; color: #78909c; -webkit-text-stroke: 0; }
.account { display: flex; align-items: center; width: 528px; height: 64px; margin-top: 36px; padding: 0 0 0 16px; border: 2px solid #dadce0; border-radius: 32px; background: #fff; color: #3c4043; font: 500 27px/40px Inter, sans-serif; letter-spacing: .3px; }
.account i { width: 40px; height: 44px; margin: 3px 17px 0 0; border-radius: 50%; background: #fffd97; }
.account span { margin-top: 2px; }
.account svg { margin: 4px 0 0 15px; }
h1 { margin: 49px 0 18px; font-size: 48px; line-height: 64px; font-weight: 400; letter-spacing: -.36px; color: #202124; }
.card p { margin: 0 0 40px; color: #5f6368; }
.alert { display: flex; gap: 36px; height: 228px; margin-top: 47px; padding: 36px 35px; border-radius: 16px; box-shadow: 0 2px 4px rgba(60, 64, 67, .3), 0 4px 12px 2px rgba(60, 64, 67, .15), 0 0 2px rgba(60, 64, 67, .3); }
.alert svg { flex: none; }
.form { display: grid; grid-template-columns: 440px 880px; row-gap: 48px; margin-top: 64px; }
.form label { padding-top: 26px; letter-spacing: .1px; }
.input { height: 92px; padding: 0 31px; border: 2px solid #80868b; border-radius: 8px; font-size: 32px; line-height: 90px; letter-spacing: .2px; }
.help { margin-top: 10px; display: block; font-size: 24px; line-height: 28px; letter-spacing: .53px; color: #5f6368; }
.help:has(span) { display: flex; justify-content: space-between; }
.agree { display: flex; gap: 32px; padding-top: 23px; letter-spacing: .26px; }
.agree svg { flex: none; margin-top: 3px; }

/* Dock */
.dock {
  position: absolute;
  left: 852px;
  top: 2006px;
  width: 1656px;
  height: 84px;
  padding: 0 0 6px 4px;
  border: 2px solid #45464a;
  border-radius: 22px;
  background: #1b1d24;
  box-shadow: 0 0 90px rgba(0, 0, 0, .3);
  display: grid;
  grid-template-columns: repeat(21, 66px) 34px 58px 38px 58px 74px;
  align-items: center;
  justify-items: center;
}
.slot { position: relative; }
.slot svg { width: 50px; height: 50px; }
.slot .big { width: 62px; height: 62px; margin: -6px 0; }
.slot .mid { width: 54px; height: 54px; }
.on::after { content: ""; position: absolute; left: 50%; bottom: -16px; width: 8px; height: 8px; margin-left: -4px; border-radius: 50%; background: #96979d; }
.dock hr { width: 2px; height: 60px; background: #45464a; margin-top: 6px; }
.tile { display: block; width: 50px; height: 50px; border-radius: 11px; text-align: center; font: 600 29px/48px "Open Sans", sans-serif; }
.xd { background: #450a36; color: #f26ef0; }
.ps { background: #071e36; color: #49a9f8; }
```
